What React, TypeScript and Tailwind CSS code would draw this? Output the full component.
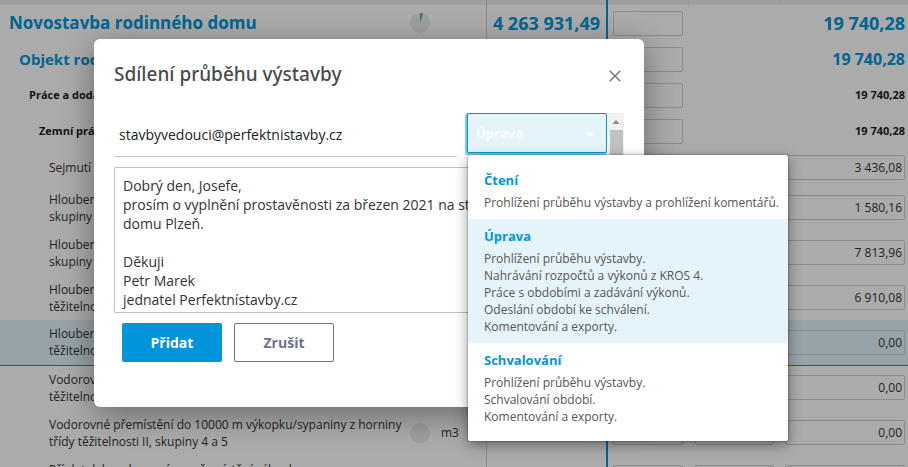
import { useState } from "react";

type Row = {
  name: string;
  level: 1 | 2 | 3 | 4 | 5;
  progress?: number;
  unit?: string;
  budget?: string;
  total: string;
  active?: boolean;
};

const rows: Row[] = [
  { name: "Novostavba rodinného domu", level: 1, progress: 5, budget: "4 263 931,49", total: "19 740,28" },
  { name: "Objekt rodinného domu", level: 2, total: "19 740,28" },
  { name: "Práce a dodávky HSV", level: 3, total: "19 740,28" },
  { name: "Zemní práce", level: 4, total: "19 740,28" },
  { name: "Sejmutí ornice", level: 5, total: "3 436,08" },
  { name: "Hloubení jam v hornině třídy těžitelnosti I, skupiny 3", level: 5, total: "1 580,16" },
  { name: "Hloubení rýh v hornině třídy těžitelnosti I, skupiny 3", level: 5, total: "7 813,96" },
  { name: "Hloubení šachet v hornině třídy těžitelnosti I", level: 5, total: "6 910,08" },
  { name: "Hloubení zářezů v hornině třídy těžitelnosti II", level: 5, total: "0,00", active: true },
  { name: "Vodorovné přemístění výkopku z horniny třídy těžitelnosti I", level: 5, total: "0,00" },
  { name: "Vodorovné přemístění do 10000 m výkopku/sypaniny z horniny třídy těžitelnosti II, skupiny 4 a 5", level: 5, progress: 0, unit: "m3", total: "0,00" },
  { name: "Příplatek k vodorovnému přemístění výkopku přes 10000 m", level: 5, total: "0,00" },
];

const breaks: Record<number, [string, string]> = {
  5: ["Hloubení jam v hornině třídy těžitelnosti I,", "skupiny 3"],
  6: ["Hloubení rýh v hornině třídy těžitelnosti I,", "skupiny 3"],
  7: ["Hloubení šachet v hornině třídy", "těžitelnosti I"],
  8: ["Hloubení zářezů v hornině třídy", "těžitelnosti II"],
  9: ["Vodorovné přemístění výkopku z horniny třídy", "těžitelnosti I"],
  10: ["Vodorovné přemístění do 10000 m výkopku/sypaniny z horniny", "třídy těžitelnosti II, skupiny 4 a 5"],
  11: ["Příplatek k vodorovnému přemístění výkopku", "přes 10000 m"],
};

const nameStyle = {
  1: "pl-[9px] text-[17px] font-bold text-[#0095da]",
  2: "pl-[19px] text-[15px] font-bold text-[#0095da]",
  3: "pl-[29px] text-[11px] font-bold text-[#1c1c1c]",
  4: "pl-[39px] text-[11px] font-bold text-[#1c1c1c]",
  5: "pl-[49px] text-[12px] leading-[17px] text-[#333]",
};

const totalStyle = {
  1: "text-[18px] font-bold text-[#0095da]",
  2: "text-[16px] font-bold text-[#0095da]",
  3: "text-[11px] font-bold text-[#1c1c1c]",
  4: "text-[11px] font-bold text-[#1c1c1c]",
  5: "",
};

const roles = [
  { name: "Čtení", lines: ["Prohlížení průběhu výstavby a prohlížení komentářů."] },
  {
    name: "Úprava",
    lines: [
      "Prohlížení průběhu výstavby.",
      "Nahrávání rozpočtů a výkonů z KROS 4.",
      "Práce s obdobími a zadávání výkonů.",
      "Odeslání období ke schválení.",
      "Komentování a exporty.",
    ],
  },
  { name: "Schvalování", lines: ["Prohlížení průběhu výstavby.", "Schvalování období.", "Komentování a exporty."] },
];

function Pie({ value }: { value: number }) {
  const a = (value / 100) * Math.PI * 2;
  return (
    <svg viewBox="0 0 20 20" className="mx-auto size-5" aria-hidden="true">
      <circle cx="10" cy="10" r="10" fill="#ececec" />
      {value > 0 && (
        <path d={`M10 10V0A10 10 0 0 1 ${10 + 10 * Math.sin(a)} ${10 - 10 * Math.cos(a)}Z`} fill="#4aa9d6" />
      )}
    </svg>
  );
}

const field = "block h-[25px] w-full rounded-xs border border-[#cfcfcf] bg-transparent text-right text-[12px] text-[#333]";

function BudgetTable() {
  return (
    <table className="w-full table-fixed border-collapse bg-white">
      <colgroup>
        <col />
        <col className="w-9" />
        <col className="w-12" />
        <col className="w-[121px]" />
        <col className="w-[82px]" />
        <col className="w-[91px]" />
        <col className="w-32" />
      </colgroup>
      <thead>
        <tr className="h-[5px] bg-[#eeeeee]">
          <th colSpan={3} className="p-0" />
          <th className="border-r-2 border-l border-r-[#0095da] border-l-[#cfcfcf] p-0" />
          <th className="p-0 shadow-[inset_-1px_0_#e2e2e2]" />
          <th className="p-0 shadow-[inset_-1px_0_#e2e2e2]" />
          <th className="p-0" />
        </tr>
      </thead>
      <tbody>
        {rows.map((row, i) => (
          <tr
            key={i}
            className={`${i < 5 ? "h-9" : "h-[45px]"} ${row.active ? "border-b border-[#0095da] bg-[#e2f3fb]" : ""}`}
          >
            <td className={`overflow-hidden p-0 whitespace-nowrap ${nameStyle[row.level]}`}>
              {breaks[i] ? breaks[i].map((line) => <div key={line}>{line}</div>) : row.name}
            </td>
            <td className="p-0">{row.progress !== undefined && <Pie value={row.progress} />}</td>
            <td className="p-0 pl-[3px] text-[12px] text-[#333]">{row.unit}</td>
            <td className="border-r-2 border-l border-r-[#0095da] border-l-[#cfcfcf] p-0 pr-[6px] text-right text-[18px] font-bold whitespace-nowrap text-[#0095da]">
              {row.budget}
            </td>
            <td className="p-0 pr-1.5 pl-[5px]">
              <input aria-label={`Procento, ${row.name}`} className={field} />
            </td>
            <td className="p-0 px-[6px]">
              {row.level === 5 && <input aria-label={`Množství, ${row.name}`} className={field} />}
            </td>
            <td className={`p-0 pr-[3px] pl-[5px] text-right whitespace-nowrap ${totalStyle[row.level]}`}>
              {row.level === 5 ? (
                <input aria-label={`Cena, ${row.name}`} defaultValue={row.total} className={`${field} pr-[2px]`} />
              ) : (
                row.total
              )}
            </td>
          </tr>
        ))}
      </tbody>
    </table>
  );
}

function RolePicker() {
  const [role, setRole] = useState("Úprava");
  return (
    <div className="relative w-[140px]">
      <label htmlFor="role" className="sr-only">
        Oprávnění
      </label>
      <select
        id="role"
        value={role}
        onChange={(e) => setRole(e.target.value)}
        className="block h-10 w-full appearance-none rounded-xs border border-[#0095da] bg-[#e5f4fb] px-2 text-[13px] leading-6 font-bold text-white shadow-[-1px_1px_0_1px_#7fcaec] outline-none"
      >
        {roles.map((r) => (
          <option key={r.name}>{r.name}</option>
        ))}
      </select>
      <svg viewBox="0 0 10 6" className="pointer-events-none absolute top-[18px] right-3 h-1.5 w-2.5" aria-hidden="true">
        <path d="M1.500 1L5 4.500L8.500 1" fill="none" stroke="#fff" strokeWidth="2" />
      </svg>
      <ul
        role="listbox"
        aria-label="Oprávnění"
        className="absolute top-[42px] left-px z-10 w-80 rounded-xs bg-white py-2 shadow-[0_0_2px_rgba(0,0,0,0.6),0_4px_14px_rgba(0,0,0,0.4)]"
      >
        {roles.map((r) => (
          <li
            key={r.name}
            role="option"
            aria-selected={r.name === role}
            onClick={() => setRole(r.name)}
            className={`px-4 py-2 text-[12px] leading-[17px] whitespace-nowrap text-[#555] ${r.name === role ? "bg-[#e5f4fb]" : ""}`}
          >
            <strong className="mb-[5px] block text-[13px] leading-[18px] text-[#0095da]">{r.name}</strong>
            {r.lines.map((line) => (
              <div key={line}>{line}</div>
            ))}
          </li>
        ))}
      </ul>
    </div>
  );
}

const message = `Dobrý den, Josefe,
prosím o vyplnění prostavěnosti za březen 2021 na stavbě
domu Plzeň.

Děkuji
Petr Marek
jednatel Perfektnístavby.cz`;

function ShareDialog() {
  return (
    <form
      role="dialog"
      aria-labelledby="share-title"
      onSubmit={(e) => e.preventDefault()}
      className="w-[550px] rounded-md bg-white px-5 pb-[45px] shadow-[0_8px_32px_rgba(0,0,0,0.4)]"
    >
      <header className="flex h-[74px] items-center justify-between pr-[3px]">
        <h2 id="share-title" className="pb-1 font-['Noto_Sans',sans-serif] text-[19px] font-medium text-[#4a4a4a]">
          Sdílení průběhu výstavby
        </h2>
        <button type="button" aria-label="Zavřít" className="text-[#777]">
          <svg viewBox="0 0 12 12" className="size-3" aria-hidden="true">
            <path d="M.7 .7L11.300 11.300M11.300 .7L.7 11.300" stroke="currentColor" strokeWidth="1.500" />
          </svg>
        </button>
      </header>
      <div className="flex items-start">
        <div className="min-w-0 flex-1">
          <div className="flex gap-[10px]">
            <input
              type="email"
              aria-label="E-mail"
              defaultValue="stavbyvedouci@perfektnistavby.cz"
              className="h-11 min-w-0 flex-1 border-b border-[#c6c6c6] px-[5px] text-[14px] text-[#222] outline-none"
            />
            <RolePicker />
          </div>
          <textarea
            aria-label="Zpráva"
            defaultValue={message}
            className="mt-[10px] block h-[146px] w-full resize-none overflow-hidden rounded-xs border border-[#c0c0c0] px-2 py-2 text-[14px] leading-[19px] whitespace-pre text-[#333] outline-none"
          />
        </div>
        <div className="ml-px flex h-[200px] w-4 flex-col items-center bg-[#f1f1f1]" aria-hidden="true">
          <svg viewBox="0 0 16 17" className="h-[17px] w-4">
            <path d="M4.500 11L8 7L11.500 11Z" fill="#8b8b8b" />
          </svg>
          <div className="w-[13px] flex-1 bg-[#c1c1c1]" />
        </div>
      </div>
      <div className="mt-[10px] flex gap-3 px-2">
        <button type="submit" className="h-[39px] w-[100px] rounded-xs bg-[#0095da] text-[14px] font-bold text-white">
          Přidat
        </button>
        <button
          type="button"
          className="h-[39px] w-[100px] rounded-xs border border-[#6f7387] bg-white text-[14px] font-bold text-[#6f7387]"
        >
          Zrušit
        </button>
      </div>
    </form>
  );
}

export default function App() {
  return (
    <main className="relative h-screen overflow-hidden font-['Open_Sans','Noto_Sans',sans-serif]">
      <BudgetTable />
      <div className="absolute inset-0 flex items-start bg-black/33 pt-[39px] pl-[94px]">
        <ShareDialog />
      </div>
    </main>
  );
}
